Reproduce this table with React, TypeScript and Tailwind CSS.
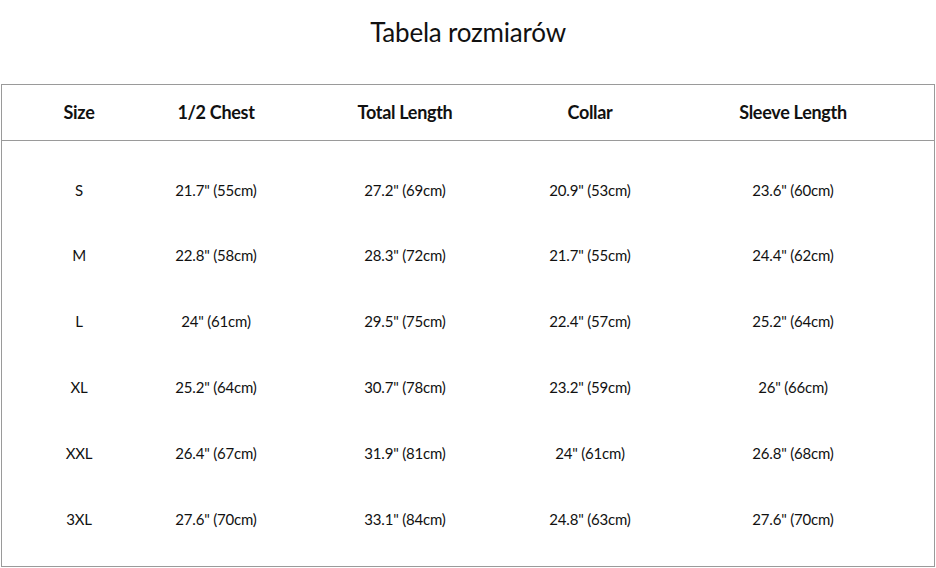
import React from "react";

const rows = [
  ["S", '21.7" (55cm)', '27.2" (69cm)', '20.9" (53cm)', '23.6" (60cm)'],
  ["M", '22.8" (58cm)', '28.3" (72cm)', '21.7" (55cm)', '24.4" (62cm)'],
  ["L", '24" (61cm)', '29.5" (75cm)', '22.4" (57cm)', '25.2" (64cm)'],
  ["XL", '25.2" (64cm)', '30.7" (78cm)', '23.2" (59cm)', '26" (66cm)'],
  ["XXL", '26.4" (67cm)', '31.9" (81cm)', '24" (61cm)', '26.8" (68cm)'],
  ["3XL", '27.6" (70cm)', '33.1" (84cm)', '24.8" (63cm)', '27.6" (70cm)'],
];

const headers = ["Size", "1/2 Chest", "Total Length", "Collar", "Sleeve Length"];

const gridCols = "grid grid-cols-[154px_120px_258px_112px_1fr]";

export default function App() {
  return (
    <div
      className="w-[936px] h-[568px] bg-white text-black"
      style={{ fontFamily: "Lato, 'Noto Sans', sans-serif" }}
    >
      <div className="h-[84px] pt-[14px] flex justify-center">
        <h1 className="text-[26px] leading-[36px] font-normal text-[#111] tracking-[-0.2px]">Tabela rozmiarów</h1>
      </div>
      <div className="ml-[1px] w-[934px] h-[483px] border border-[#9a9a9a] flex flex-col">
        <div className={`${gridCols} h-[56px] border-b border-[#9a9a9a] items-center text-[18px] font-bold text-[#111] tracking-[-0.3px]`}>
          {headers.map((h, i) => (
            <div key={h} className={`text-center ${i === 4 ? "pl-[6px]" : ""}`}>
              {h}
            </div>
          ))}
        </div>
        <div className="pt-[16px] flex flex-col">
          {rows.map((r) => (
            <div key={r[0]} className={`${gridCols} h-[65.8px] items-center text-[15px] text-[#111] tracking-[-0.2px]`}>
              {r.map((c, i) => (
                <div key={i} className={`text-center ${i === 4 ? "pl-[6px]" : ""}`}>
                  {c}
                </div>
              ))}
            </div>
          ))}
        </div>
      </div>
    </div>
  );
}
